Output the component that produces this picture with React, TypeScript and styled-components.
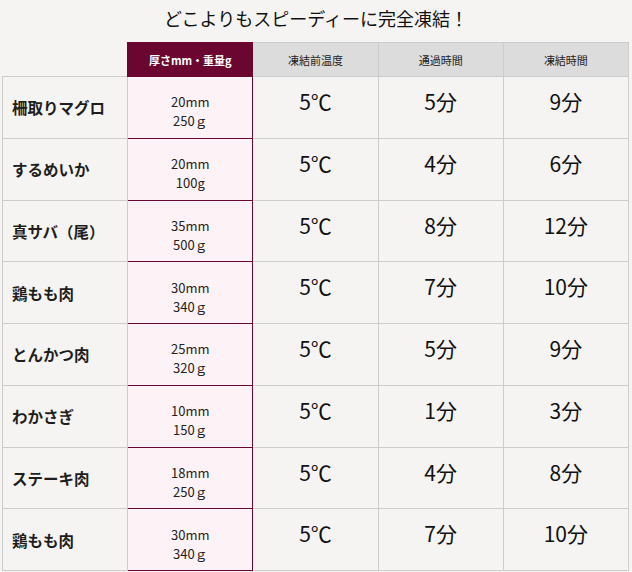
import {createGlobalStyle} from 'styled-components';
import styled from 'styled-components';

const GlobalStyle = createGlobalStyle`
  html, body {
    margin: 0;
    padding: 0;
    background: #f5f4f2;
  }
  body {
    font-family: "Noto Sans CJK JP", "Noto Sans", sans-serif;
    color: #222;
  }
`;

const Page = styled.div`
  width: 632px;
  height: 572px;
  background: #f5f4f2;
  overflow: hidden;
`;

const Title = styled.h2`
  margin: 0;
  height: 42px;
  line-height: 36px;
  font-size: 18px;
  font-weight: 400;
  text-align: center;
  color: #111;
`;

const Table = styled.table`
  width: 627px;
  margin-left: 2px;
  border-collapse: collapse;
  table-layout: fixed;
`;

const HeadCell = styled.th<{$accent?: boolean; $blank?: boolean}>`
  height: 33px;
  padding: 0;
  font-size: 11px;
  font-weight: ${p => (p.$accent ? 700 : 400)};
  color: ${p => (p.$accent ? '#fff' : '#222')};
  background: ${p => (p.$blank ? 'transparent' : p.$accent ? '#6b0630' : '#dcdcdc')};
  border: ${p => (p.$blank ? 'none' : p.$accent ? '1px solid #6b0630' : '1px solid #cccccc')};
`;

const BodyRow = styled.tr`
  height: 61.75px;
`;

const NameCell = styled.td`
  padding: 0 0 0 9px;
  font-size: 15.5px;
  font-weight: 700;
  color: #1e1e1e;
  border: 1px solid #cccccc;
`;

const SizeCell = styled.td`
  padding: 8px 0 0;
  font-size: 13px;
  line-height: 19px;
  text-align: center;
  background: #fdf3f6;
  border: 1px solid #6b0630;
`;

const ValueCell = styled.td`
  padding: 6px 0 0;
  vertical-align: top;
  font-size: 21px;
  line-height: 36px;
  text-align: center;
  color: #111;
  border: 1px solid #cccccc;
`;

type Row = {name: string; mm: string; g: string; temp: string; pass: string; freeze: string};

const rows: Row[] = [
  {name: '柵取りマグロ', mm: '20mm', g: '250ｇ', temp: '5℃', pass: '5分', freeze: '9分'},
  {name: 'するめいか', mm: '20mm', g: '100g', temp: '5℃', pass: '4分', freeze: '6分'},
  {name: '真サバ（尾）', mm: '35mm', g: '500ｇ', temp: '5℃', pass: '8分', freeze: '12分'},
  {name: '鶏もも肉', mm: '30mm', g: '340ｇ', temp: '5℃', pass: '7分', freeze: '10分'},
  {name: 'とんかつ肉', mm: '25mm', g: '320ｇ', temp: '5℃', pass: '5分', freeze: '9分'},
  {name: 'わかさぎ', mm: '10mm', g: '150ｇ', temp: '5℃', pass: '1分', freeze: '3分'},
  {name: 'ステーキ肉', mm: '18mm', g: '250ｇ', temp: '5℃', pass: '4分', freeze: '8分'},
  {name: '鶏もも肉', mm: '30mm', g: '340ｇ', temp: '5℃', pass: '7分', freeze: '10分'},
];

export default function App() {
  return (
    <Page>
      <GlobalStyle />
      <Title>どこよりもスピーディーに完全凍結！</Title>
      <Table>
        <thead>
          <tr>
            <HeadCell $blank />
            <HeadCell $accent>厚さmm・重量g</HeadCell>
            <HeadCell>凍結前温度</HeadCell>
            <HeadCell>通過時間</HeadCell>
            <HeadCell>凍結時間</HeadCell>
          </tr>
        </thead>
        <tbody>
          {rows.map((row, i) => (
            <BodyRow key={i}>
              <NameCell>{row.name}</NameCell>
              <SizeCell>
                {row.mm}
                <br />
                {row.g}
              </SizeCell>
              <ValueCell>{row.temp}</ValueCell>
              <ValueCell>{row.pass}</ValueCell>
              <ValueCell>{row.freeze}</ValueCell>
            </BodyRow>
          ))}
        </tbody>
      </Table>
    </Page>
  );
}
